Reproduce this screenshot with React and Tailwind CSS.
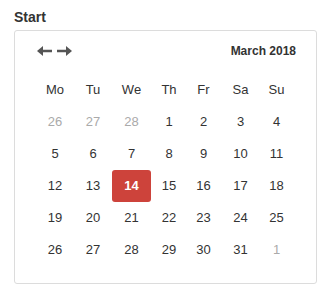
import React from "react";

const days = ["Mo", "Tu", "We", "Th", "Fr", "Sa", "Su"];

const weeks = [
  [
    { d: 26, out: true },
    { d: 27, out: true },
    { d: 28, out: true },
    { d: 1 },
    { d: 2 },
    { d: 3 },
    { d: 4 },
  ],
  [{ d: 5 }, { d: 6 }, { d: 7 }, { d: 8 }, { d: 9 }, { d: 10 }, { d: 11 }],
  [{ d: 12 }, { d: 13 }, { d: 14, sel: true }, { d: 15 }, { d: 16 }, { d: 17 }, { d: 18 }],
  [{ d: 19 }, { d: 20 }, { d: 21 }, { d: 22 }, { d: 23 }, { d: 24 }, { d: 25 }],
  [{ d: 26 }, { d: 27 }, { d: 28 }, { d: 29 }, { d: 30 }, { d: 31 }, { d: 1, out: true }],
];

function Arrow({ flip }) {
  return (
    <svg
      width="15"
      height="10"
      viewBox="0 0 15 10"
      className={flip ? "rotate-180" : ""}
      fill="#555"
    >
      <polygon points="0,5 6,0 6,10" />
      <rect x="5" y="3.75" width="10" height="2.5" />
    </svg>
  );
}

export default function App() {
  return (
    <div className="bg-white w-[335px] h-[297px] pl-[14px] pt-[9px] font-['Liberation_Sans',Arial,sans-serif] text-[#333]">
      <div className="text-[14px] font-bold leading-[16px] h-[21px]">Start</div>
      <div className="w-[303px] h-[254px] border border-[#dcdcdc] rounded-[3px] pt-[10px] pl-[21px] pr-[20px]">
        <div className="flex items-center justify-between h-[20px] pl-[1px]">
          <div className="flex gap-[5px]">
            <Arrow />
            <Arrow flip />
          </div>
          <div className="text-[12px] font-bold">March 2018</div>
        </div>
        <div className="mt-[13px] grid grid-cols-[38px_38px_39px_36px_33px_41px_31px] text-[13px]">
          {days.map((d) => (
            <div key={d} className="h-[32px] flex items-center justify-center">
              {d}
            </div>
          ))}
          {weeks.flat().map((c, i) => (
            <div
              key={i}
              className={`h-[32px] flex items-center justify-center ${
                c.sel
                  ? "bg-[#cd433b] text-white font-bold rounded-[3px]"
                  : c.out
                  ? "text-[#aaa]"
                  : ""
              }`}
            >
              {c.d}
            </div>
          ))}
        </div>
      </div>
    </div>
  );
}
